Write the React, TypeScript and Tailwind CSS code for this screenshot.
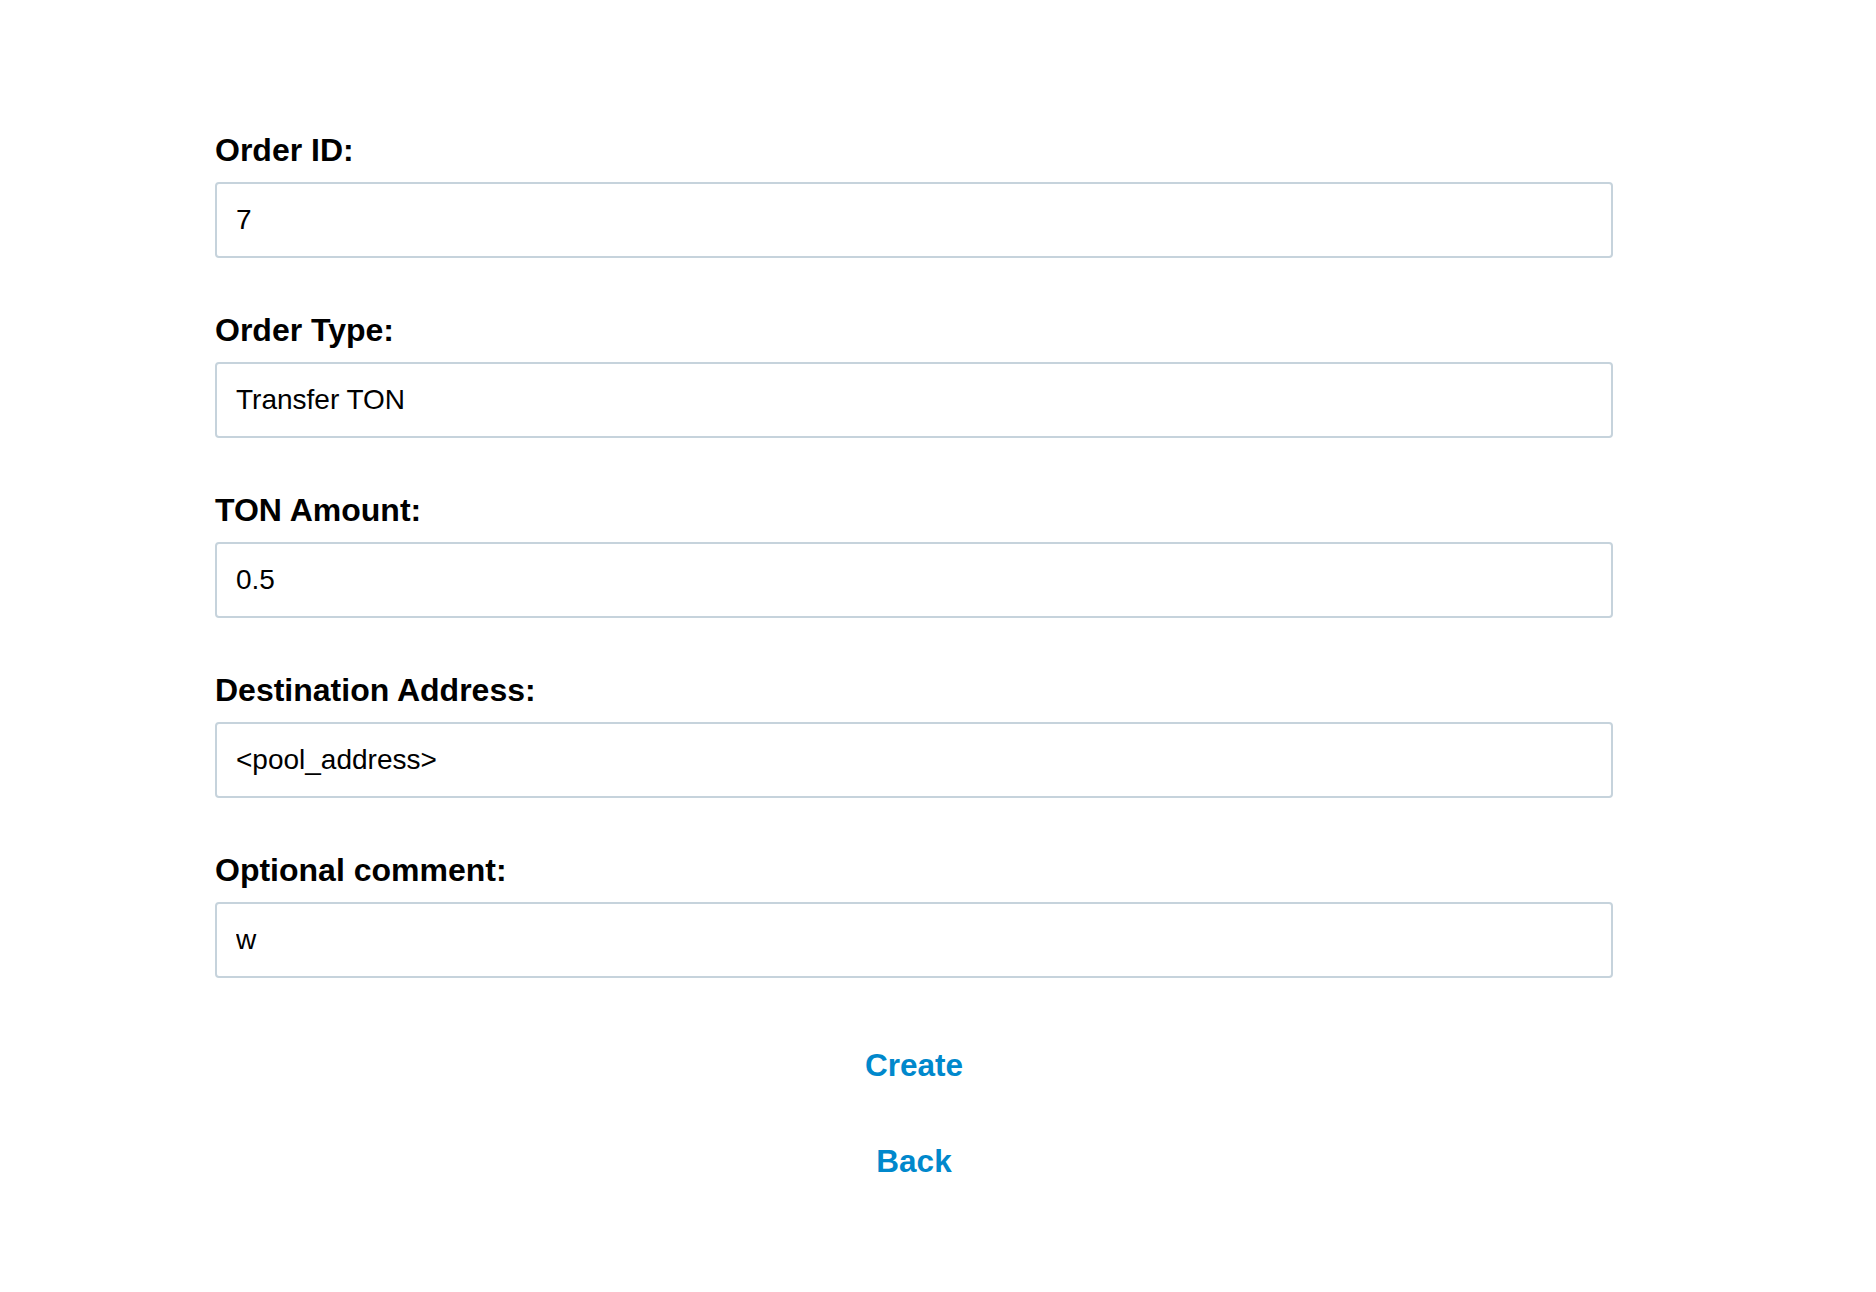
import React from "react";

const fields: { label: string; value: string }[] = [
  { label: "Order ID:", value: "7" },
  { label: "Order Type:", value: "Transfer TON" },
  { label: "TON Amount:", value: "0.5" },
  { label: "Destination Address:", value: "<pool_address>" },
  { label: "Optional comment:", value: "w" },
];

export default function App() {
  return (
    <div
      className="min-h-[1292px] w-full bg-white text-black"
      style={{ fontFamily: '"Liberation Sans", Arial, Helvetica, sans-serif' }}
    >
      <div className="ml-[215px] w-[1398px] pt-[132px]">
        {fields.map((f) => (
          <div key={f.label} className="mb-[54px] flex flex-col">
            <label className="mb-[14px] text-[32px] font-bold leading-[36px]">
              {f.label}
            </label>
            <input
              readOnly
              value={f.value}
              className="h-[76px] w-full rounded-[4px] border-2 border-[#c6d3dc] bg-white px-[19px] text-[28px] text-black outline-none"
              style={{ fontFamily: '"Liberation Sans", Arial, Helvetica, sans-serif' }}
            />
          </div>
        ))}
        <div className="flex flex-col items-center pt-[15px]">
          <button className="cursor-pointer bg-transparent text-[31.5px] font-bold leading-[36px] text-[#0088cc]">
            Create
          </button>
          <button className="mt-[60px] cursor-pointer bg-transparent text-[31.5px] font-bold leading-[36px] text-[#0088cc]">
            Back
          </button>
        </div>
      </div>
    </div>
  );
}
